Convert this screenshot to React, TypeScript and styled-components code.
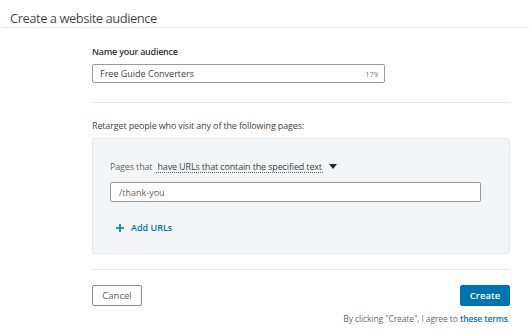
import React from 'react';
import styled, { createGlobalStyle } from 'styled-components';

const Global = createGlobalStyle`
  html, body {
    margin: 0;
    padding: 0;
    background: #fff;
  }
  body {
    font-family: 'Open Sans', 'Noto Sans', sans-serif;
    color: rgba(0, 0, 0, 0.9);
  }
`;

const Page = styled.div`
  width: 529px;
  height: 335px;
  overflow: hidden;
`;

const Header = styled.div`
  height: 28px;
  padding: 8px 0 0 8px;
  box-sizing: border-box;
  border-bottom: 1px solid #e6e9ec;
  display: flex;
  align-items: center;
  margin-left: 2px;
`;

const Title = styled.h2`
  margin: 0;
  font-size: 13px;
  font-weight: 400;
  color: rgba(0, 0, 0, 0.75);
  letter-spacing: -0.5px;
`;

const Body = styled.div`
  padding: 0 19px 0 92px;
  display: flex;
  flex-direction: column;
`;

const Label = styled.label`
  font-size: 9px;
  font-weight: 600;
  letter-spacing: -0.25px;
  color: rgba(0, 0, 0, 0.85);
  margin-top: 17px;
  margin-bottom: 6px;
`;

const NameField = styled.div`
  width: 293px;
  height: 19px;
  border: 1px solid #9a9a9a;
  border-radius: 2px;
  display: flex;
  align-items: center;
  justify-content: space-between;
  padding: 0 6px 0 7px;
  box-sizing: border-box;
`;

const FieldText = styled.span`
  font-size: 9px;
  color: rgba(0, 0, 0, 0.8);
`;

const Counter = styled.span`
  font-size: 7.5px;
  color: rgba(0, 0, 0, 0.6);
`;

const Divider = styled.hr<{ $top: number }>`
  border: 0;
  border-top: 1px solid #e6e9ec;
  margin: ${(p) => p.$top}px 0 0 0;
  width: 100%;
`;

const SubLabel = styled.p`
  font-size: 9px;
  letter-spacing: -0.15px;
  color: rgba(0, 0, 0, 0.8);
  margin: 16px 0 6px;
`;

const RuleBox = styled.div`
  background: #f3f6f8;
  border: 1px solid #e6e9ec;
  border-radius: 2px;
  padding: 21px 28px 18px 17px;
  display: flex;
  flex-direction: column;
  height: 116px;
  box-sizing: border-box;
`;

const RuleRow = styled.div`
  display: flex;
  align-items: center;
  gap: 4px;
  font-size: 9px;
  letter-spacing: -0.15px;
  color: rgba(0, 0, 0, 0.65);
`;

const Select = styled.span`
  color: rgba(0, 0, 0, 0.8);
  border-bottom: 1px dotted rgba(0, 0, 0, 0.6);
  line-height: 11px;
  padding: 0 1px;
`;

const Caret = styled.span`
  width: 0;
  height: 0;
  border-left: 4px solid transparent;
  border-right: 4px solid transparent;
  border-top: 5px solid rgba(0, 0, 0, 0.85);
  margin-left: 2px;
`;

const UrlField = styled.div`
  margin-top: 9px;
  height: 20px;
  border: 1px solid #9a9a9a;
  border-radius: 2px;
  background: #fff;
  padding: 0 8px;
  display: flex;
  align-items: center;
  box-sizing: border-box;
  font-size: 9px;
  color: rgba(0, 0, 0, 0.7);
`;

const AddLink = styled.button`
  align-self: flex-start;
  margin-top: 19px;
  margin-left: 6px;
  padding: 0;
  background: none;
  border: 0;
  display: flex;
  align-items: center;
  gap: 7px;
  font-family: inherit;
  font-size: 9px;
  font-weight: 600;
  color: #0073b1;
`;

const Footer = styled.div`
  display: flex;
  justify-content: space-between;
  align-items: center;
  margin-top: 15px;
`;

const Button = styled.button<{ $primary?: boolean }>`
  width: 50px;
  height: 21px;
  border-radius: 2px;
  font-family: inherit;
  font-size: 9.5px;
  padding: 0;
  border: 1px solid ${(p) => (p.$primary ? '#0073b1' : '#8a8a8a')};
  background: ${(p) => (p.$primary ? '#0073b1' : '#fff')};
  color: ${(p) => (p.$primary ? '#fff' : 'rgba(0, 0, 0, 0.7)')};
  font-weight: ${(p) => (p.$primary ? 600 : 400)};
`;

const Terms = styled.p`
  align-self: flex-end;
  margin: 7px 0 0;
  font-size: 8.5px;
  letter-spacing: -0.1px;
  color: rgba(0, 0, 0, 0.65);
`;

const TermsLink = styled.a`
  color: #0073b1;
  font-weight: 600;
  text-decoration: none;
`;

const Plus = () => (
  <svg width='8' height='8' viewBox='0 0 8 8'>
    <path d='M4 0v8M0 4h8' stroke='#0073b1' strokeWidth='1.6' />
  </svg>
);

export default function App() {
  return (
    <Page>
      <Global />
      <Header>
        <Title>Create a website audience</Title>
      </Header>
      <Body>
        <Label>Name your audience</Label>
        <NameField>
          <FieldText>Free Guide Converters</FieldText>
          <Counter>179</Counter>
        </NameField>
        <Divider $top={19} />
        <SubLabel>Retarget people who visit any of the following pages:</SubLabel>
        <RuleBox>
          <RuleRow>
            Pages that <Select>have URLs that contain the specified text</Select>
            <Caret />
          </RuleRow>
          <UrlField>/thank-you</UrlField>
          <AddLink>
            <Plus />
            Add URLs
          </AddLink>
        </RuleBox>
        <Divider $top={15} />
        <Footer>
          <Button>Cancel</Button>
          <Button $primary>Create</Button>
        </Footer>
        <Terms>
          By clicking "Create", I agree to <TermsLink href='#'>these terms</TermsLink>.
        </Terms>
      </Body>
    </Page>
  );
}
